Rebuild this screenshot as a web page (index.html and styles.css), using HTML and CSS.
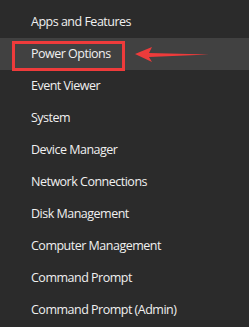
FILE: index.html
```html
<!DOCTYPE html>
<html lang="en">
<head>
    <meta charset="UTF-8">
    <title>Quick Link Menu</title>
    <link rel="stylesheet" href="styles.css">
</head>
<body>
    <div class="menu">
        <div class="item">Apps and Features</div>
        <div class="item active">
            Power Options
            <span class="mark"></span>
            <svg class="arrow" width="80" height="20" viewBox="0 0 80 20">
                <polygon points="0,9 17,2 14,8 74,9.5 14,12 17,17" fill="#ee3b3b"/>
            </svg>
        </div>
        <div class="item">Event Viewer</div>
        <div class="item">System</div>
        <div class="item">Device Manager</div>
        <div class="item">Network Connections</div>
        <div class="item">Disk Management</div>
        <div class="item">Computer Management</div>
        <div class="item">Command Prompt</div>
        <div class="item">Command Prompt (Admin)</div>
    </div>
</body>
</html>
```

FILE: styles.css
```css
body {
    margin: 0;
    background: #2b2b2b;
    font-family: "Open Sans", "Noto Sans", sans-serif;
}

.menu {
    display: flex;
    flex-direction: column;
    padding-top: 6px;
}

.item {
    position: relative;
    height: 32px;
    line-height: 32px;
    padding-left: 31px;
    font-size: 12.5px;
    letter-spacing: -0.5px;
    color: #f0f0f0;
    white-space: nowrap;
}

.active {
    background: #414141;
}

.mark {
    position: absolute;
    left: 12px;
    top: 3px;
    width: 107px;
    height: 24px;
    border: 3px solid #ee3b3b;
}

.arrow {
    position: absolute;
    left: 135px;
    top: 7px;
}
```
